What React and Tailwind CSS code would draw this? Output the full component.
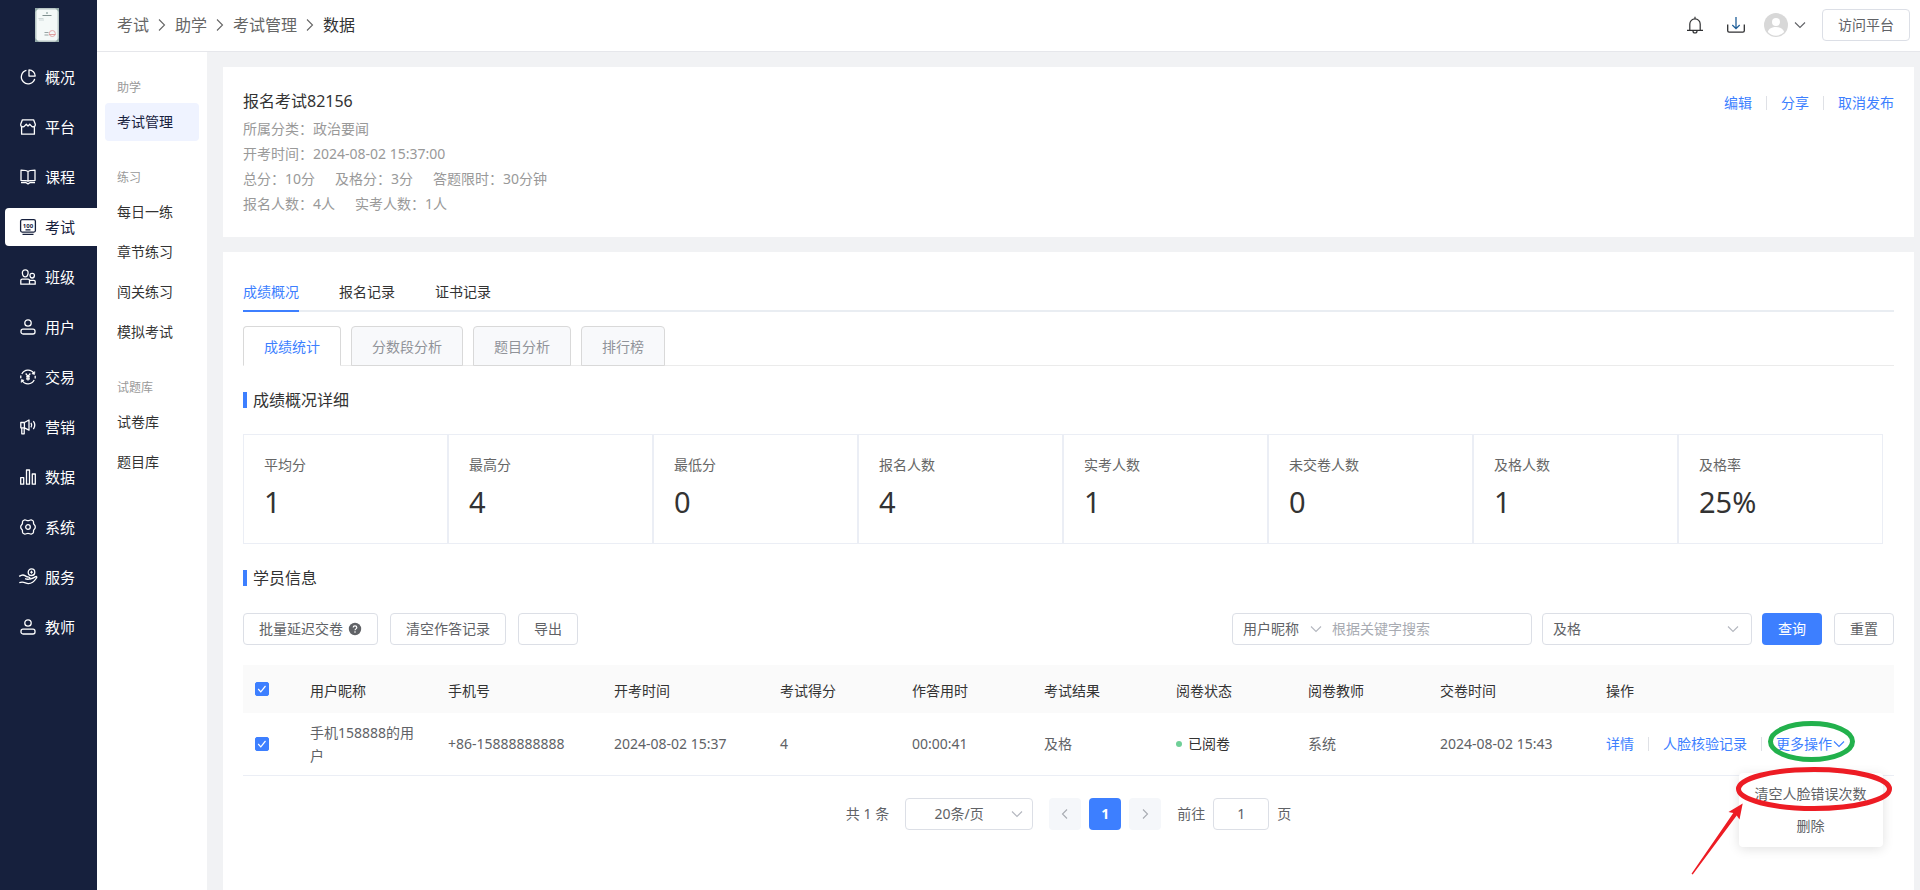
import { useState } from "react";

const sideNav = [
  { label: "概况", icon: PieIcon },
  { label: "平台", icon: StoreIcon },
  { label: "课程", icon: BookIcon },
  { label: "考试", icon: ExamIcon, active: true },
  { label: "班级", icon: GroupIcon },
  { label: "用户", icon: UserIcon },
  { label: "交易", icon: TradeIcon },
  { label: "营销", icon: HornIcon },
  { label: "数据", icon: BarsIcon },
  { label: "系统", icon: GearIcon },
  { label: "服务", icon: ServiceIcon },
  { label: "教师", icon: UserIcon },
];

const subNav = [
  { title: "助学", items: ["考试管理"] },
  { title: "练习", items: ["每日一练", "章节练习", "闯关练习", "模拟考试"] },
  { title: "试题库", items: ["试卷库", "题目库"] },
];

const breadcrumb = ["考试", "助学", "考试管理", "数据"];

const examInfo = [
  ["所属分类：政治要闻"],
  ["开考时间：2024-08-02 15:37:00"],
  ["总分：10分", "及格分：3分", "答题限时：30分钟"],
  ["报名人数：4人", "实考人数：1人"],
];

const mainTabs = ["成绩概况", "报名记录", "证书记录"];
const subTabs = ["成绩统计", "分数段分析", "题目分析", "排行榜"];

const stats = [
  { label: "平均分", value: "1" },
  { label: "最高分", value: "4" },
  { label: "最低分", value: "0" },
  { label: "报名人数", value: "4" },
  { label: "实考人数", value: "1" },
  { label: "未交卷人数", value: "0" },
  { label: "及格人数", value: "1" },
  { label: "及格率", value: "25%" },
];

const columns = [
  { label: "用户昵称", width: "w-[138px]" },
  { label: "手机号", width: "w-[166px]" },
  { label: "开考时间", width: "w-[166px]" },
  { label: "考试得分", width: "w-[132px]" },
  { label: "作答用时", width: "w-[132px]" },
  { label: "考试结果", width: "w-[132px]" },
  { label: "阅卷状态", width: "w-[132px]" },
  { label: "阅卷教师", width: "w-[132px]" },
  { label: "交卷时间", width: "w-[166px]" },
  { label: "操作", width: "w-[298px]" },
];

function NavSvg({ children }) {
  return (
    <svg
      viewBox="0 0 16 16"
      width="16"
      height="16"
      fill="none"
      stroke="currentColor"
      strokeWidth="1.3"
      strokeLinejoin="round"
      aria-hidden="true"
      className="shrink-0 overflow-visible">
      {children}
    </svg>
  );
}

function PieIcon() {
  return (
    <NavSvg>
      <path d="M6.4 1.4a6.8 6.8 0 1 0 8.3 8.4" />
      <path d="M9 .9v6.2h6.2A6.2 6.2 0 0 0 9 .9Z" />
    </NavSvg>
  );
}

function StoreIcon() {
  return (
    <NavSvg>
      <path d="M2.4.8h11.2l1.7 4.5a2.2 2.2 0 0 1-4 1.6L9.700 5.200 8 7.100 6.300 5.200 4.700 6.900a2.200 2.200 0 0 1-4-1.600Z" />
      <path d="M1.600 7.700v7.500h12.800V7.700" />
    </NavSvg>
  );
}

function BookIcon() {
  return (
    <NavSvg>
      <path d="M8 2.600v9.500M8 2.600C7 1.500 5 1.200 1 1.200v10.200c4 0 6 .1 7 .9 1-.8 3-.9 7-.9V1.200c-4 0-6 .3-7 1.400Z" />
      <path d="M1 13.500h4.800L8 14.900l2.200-1.400H15" />
    </NavSvg>
  );
}

function ExamIcon() {
  return (
    <NavSvg>
      <rect x=".6" y=".7" width="14.8" height="12.4" rx="1.5" />
      <text
        x="8"
        y="8.8"
        textAnchor="middle"
        fontSize="6"
        fontWeight="700"
        fill="currentColor"
        stroke="none">
        100
      </text>
      <path d="M5.5 10.8h5M2.500 15.400h11" />
    </NavSvg>
  );
}

function GroupIcon() {
  return (
    <NavSvg>
      <path d="M5.3.9c2 0 3 1.2 2.8 3.2-.2 2.300-1.200 3.700-2.800 3.700S2.600 6.400 2.400 4.200C2.200 2.200 3.200.9 5.300.9Z" />
      <path d="M12.2 4.300c1.500 0 2.300.9 2.200 2.300-.1 1.500-.9 2.400-2.200 2.400s-2-.9-2.200-2.400c-.1-1.400.6-2.300 2.200-2.300Z" />
      <path d="M.8 15.200v-3.700c0-.9.6-1.400 1.400-1.400h6c.8 0 1.300.5 1.300 1.400v3.700ZM9.500 15.200h5.700v-2.600c0-.9-.5-1.300-1.300-1.300H9.500" />
    </NavSvg>
  );
}

function UserIcon() {
  return (
    <NavSvg>
      <circle cx="8" cy="4" r="3.200" />
      <rect x="1" y="10.2" width="14" height="4.800" rx="2" />
    </NavSvg>
  );
}

function TradeIcon() {
  return (
    <NavSvg>
      <path d="M1.800 5A7 7 0 0 1 14 4.500M14.200 11A7 7 0 0 1 2 11.500M.8 6.600v2.600M15.200 6.800v2.600" />
      <path d="m14.900 2.600-.4 2.900-2.600-.8ZM1.100 13.400l.4-2.900 2.600.8Z" fill="currentColor" strokeWidth=".6" />
      <path d="M5.700 4.500 8 7.400l2.300-2.900M8 7.400v4.200M6 7.900h4M6 9.800h4" />
    </NavSvg>
  );
}

function HornIcon() {
  return (
    <NavSvg>
      <path d="M.8 3.500h3.600L9 1v10.200L4.400 8.800H.8ZM4.400 3.500v5.300M1.800 8.800v6h2.400v-6" />
      <path d="M11 3.800c.9 1.400.9 3.200 0 4.600M13.400 2.200c1.700 2.400 1.700 5.500 0 7.900" />
    </NavSvg>
  );
}

function BarsIcon() {
  return (
    <NavSvg>
      <rect x=".7" y="8.7" width="3" height="6.500" />
      <rect x="6.5" y="1" width="3" height="14.200" />
      <rect x="12.3" y="5" width="3" height="10.200" />
    </NavSvg>
  );
}

function GearIcon() {
  return (
    <NavSvg>
      <path d="M4.800.9C5.900.7 6.500 1.700 8 1.700S10.100.7 11.200.9c1.400.4 2.200 1 2.300 1.900.1.900-.2 1.500.3 2.400.5.8 1.500 1 1.500 2.800s-1 2-1.500 2.800c-.5.900-.2 1.500-.3 2.400-.1.900-.9 1.500-2.300 1.900-1.100.2-1.700-.8-3.200-.8s-2.100 1-3.200.8c-1.400-.4-2.200-1-2.300-1.900-.1-.9.2-1.500-.3-2.400C1.700 10 .7 9.800.7 8s1-2 1.500-2.800c.5-.9.2-1.500.3-2.400.1-.9.9-1.500 2.300-1.900Z" />
      <circle cx="8" cy="8" r="2.300" />
    </NavSvg>
  );
}

function ServiceIcon() {
  return (
    <NavSvg>
      <circle cx="11.5" cy="3.2" r="3.300" />
      <path d="M11.5 1.700v3M10 3.200h3" strokeWidth="1" />
      <path d="M-.8 7.400C1.500 5.800 3.300 5.500 4.900 6.600c1.400 1 2.400 1.500 3.900 1.500 1.400 0 1.700 1.900.2 2.100-1.400.2-2.700 0-3.900-.6" />
      <path d="M9.700 10.100c2-.3 3.900-1.100 6-2.500 1-.3 1.400.6.8 1.400-2.200 3.400-4.900 5.600-8.200 5.600-3 0-4.300-2.600-9-.9" />
    </NavSvg>
  );
}

function Chevron({ className, d = "m1 3.500 5 5 5-5" }) {
  return (
    <svg
      viewBox="0 0 12 12"
      width="12"
      height="12"
      fill="none"
      stroke="currentColor"
      strokeWidth="1.1"
      aria-hidden="true"
      className={className}>
      <path d={d} />
    </svg>
  );
}

function Logo() {
  return (
    <svg viewBox="0 0 24 34" width="24" height="34" aria-hidden="true">
      <rect width="24" height="34" fill="#b9c7c6" />
      <rect x="1.5" y="1.5" width="21" height="31" fill="#f4f9f8" />
      <path d="M0 0h4L0 4ZM24 0v4l-4-4ZM0 34v-4l4 4ZM24 34h-4l4-4Z" fill="#93a9a8" />
      <circle cx="12" cy="5" r="1" fill="#9fb0b0" />
      <path d="M7.500 7.500h9" stroke="#7f8f8f" />
      <path d="M3.500 10.500h5M4 12h5" stroke="#c4cfcf" strokeWidth=".8" />
      <path d="M9.500 24.500h4M9.500 27h4" stroke="#8d9a9a" strokeWidth=".9" />
      <circle cx="17.300" cy="25.500" r="3" fill="none" stroke="#e3a9a9" />
      <path d="M14 26.500h6.500" stroke="#d98c8c" strokeWidth=".8" />
    </svg>
  );
}

function Sidebar() {
  return (
    <aside className="w-[97px] shrink-0 bg-[#16203d] pt-2">
      <div className="flex justify-center pr-[3px]">
        <Logo />
      </div>
      <nav className="mt-4 flex flex-col gap-3 pl-[5px]">
        {sideNav.map(({ label, icon: Icon, active }) => (
          <a
            key={label}
            href="#"
            className={
              active
                ? "flex h-[38px] items-center gap-[9px] rounded-l-sm bg-white pl-[15px] text-[15px] text-[#16203d]"
                : "flex h-[38px] items-center gap-[9px] pl-[15px] text-[15px] text-white"
            }>
            <Icon />
            {label}
          </a>
        ))}
      </nav>
    </aside>
  );
}

function Header() {
  return (
    <header className="flex h-[52px] items-center justify-between border-b border-[#e6e7eb] bg-white pr-2.5 pb-px pl-5">
      <nav className="flex items-center text-base text-[#666]">
        {breadcrumb.map((item, i) => (
          <span key={item} className="flex items-center">
            {i > 0 && <Chevron d="m3 0.500 5.500 5.500L3 11.500" className="mx-[7px]" />}
            <a
              href="#"
              className={i === breadcrumb.length - 1 ? "text-[#333]" : ""}>
              {item}
            </a>
          </span>
        ))}
      </nav>

      <div className="flex items-center text-[#303133]">
        <button aria-label="消息" className="mr-6">
          <svg viewBox="0 0 16 18" width="16" height="18" fill="none" stroke="currentColor" strokeWidth="1.2">
            <path d="M0 14.400h16M2.800 14.400V8a5.200 5.200 0 0 1 10.400 0v6.400M8 2.800V.8M6 15a2 2 0 0 0 4 0" />
          </svg>
        </button>
        <button aria-label="下载" className="mr-[19px]">
          <svg viewBox="0 0 18 18" width="18" height="18" fill="none" stroke="currentColor" strokeWidth="1.3">
            <path d="M.7 8.500v6.300c0 .9.500 1.400 1.400 1.400h13.800c.9 0 1.400-.5 1.400-1.400V8.500" />
            <path d="M9 1v11.500M5.300 9 9 12.600 12.700 9" stroke="#1f5f99" />
          </svg>
        </button>
        <button aria-label="账号" className="mr-4 flex items-center gap-1.5">
          <svg viewBox="0 0 24 24" width="24" height="24">
            <circle cx="12" cy="12" r="12" fill="#d8d8d8" />
            <circle cx="12" cy="9" r="4" fill="#fff" />
            <path d="M3.800 19c1-3.600 4.300-5 8.200-5s7.200 1.400 8.200 5a11 11 0 0 1-16.400 0Z" fill="#fff" />
          </svg>
          <Chevron className="text-[#606266]" />
        </button>
        <button className="h-8 w-[88px] rounded border border-[#dcdfe6] text-sm text-[#606266]">
          访问平台
        </button>
      </div>
    </header>
  );
}

function SubMenu() {
  return (
    <aside className="flex w-[110px] shrink-0 flex-col gap-[29px] bg-white px-2 pt-7">
      {subNav.map((group) => (
        <div key={group.title}>
          <p className="mb-[7px] pl-3 text-xs leading-4 text-[#999]">{group.title}</p>
          <ul className="flex flex-col gap-0.5 text-sm text-[#333]">
            {group.items.map((item) => (
              <li key={item}>
                <a
                  href="#"
                  className={
                    item === "考试管理"
                      ? "flex h-[38px] items-center rounded bg-[#eff3ff] pl-3 text-[#16203d]"
                      : "flex h-[38px] items-center pl-3"
                  }>
                  {item}
                </a>
              </li>
            ))}
          </ul>
        </div>
      ))}
    </aside>
  );
}

function Divider() {
  return <span className="h-3.5 w-px bg-[#dfe1e6]" />;
}

function ExamSummary() {
  return (
    <section className="flex items-start justify-between bg-white px-5 pt-[19px] pb-[21px]">
      <div>
        <h1 className="text-base leading-[30px] text-[#333]">报名考试82156</h1>
        {examInfo.map((line) => (
          <p key={line[0]} className="flex gap-5 text-sm leading-[25px] text-[#999]">
            {line.map((text) => (
              <span key={text}>{text}</span>
            ))}
          </p>
        ))}
      </div>
      <div className="flex items-center gap-3.5 text-sm leading-[34px] text-[#3d7fff]">
        <a href="#">编辑</a>
        <Divider />
        <a href="#">分享</a>
        <Divider />
        <a href="#">取消发布</a>
      </div>
    </section>
  );
}

function SectionTitle({ children }) {
  return (
    <h2 className="mt-[22px] flex h-6 items-center gap-1.5 text-base text-[#333]">
      <span className="h-4 w-1 bg-[#3d7fff]" />
      {children}
    </h2>
  );
}

function Toolbar() {
  const button =
    "flex h-8 items-center gap-[5px] rounded border border-[#dcdfe6] px-[15px] text-sm text-[#606266]";
  return (
    <div className="mt-[23px] flex items-center justify-between">
      <div className="flex gap-3">
        <button className={button}>
          批量延迟交卷
          <svg viewBox="0 0 14 14" width="14" height="14" aria-hidden="true">
            <circle cx="7" cy="7" r="6.200" fill="#606266" />
            <path
              d="M5.200 5.500c0-2.200 3.600-2.200 3.600 0C8.800 6.800 7 6.900 7 8.200"
              fill="none"
              stroke="#fff"
              strokeWidth="1.2"
            />
            <circle cx="7" cy="10" r=".8" fill="#fff" />
          </svg>
        </button>
        <button className={button}>清空作答记录</button>
        <button className={button}>导出</button>
      </div>

      <div className="flex items-center text-sm text-[#606266]">
        <div className="mr-2.5 flex h-8 w-[300px] items-center rounded border border-[#dcdfe6]">
          <div className="relative">
            <select
              aria-label="搜索类型"
              className="w-[99px] appearance-none bg-transparent pl-2.5 outline-none">
              <option>用户昵称</option>
            </select>
            <Chevron className="pointer-events-none absolute top-1/2 right-2.5 -translate-y-1/2 text-[#b4b7bf]" />
          </div>
          <input
            aria-label="关键字"
            placeholder="根据关键字搜索"
            className="min-w-0 flex-1 outline-none placeholder:text-[#a8abb2]"
          />
        </div>
        <div className="relative mr-2.5">
          <select
            aria-label="考试结果"
            className="h-8 w-[210px] appearance-none rounded border border-[#dcdfe6] bg-white px-2.5 outline-none">
            <option>及格</option>
          </select>
          <Chevron className="pointer-events-none absolute top-1/2 right-[13px] -translate-y-1/2 text-[#b4b7bf]" />
        </div>
        <button className="mr-3 h-8 w-[60px] rounded bg-[#3d7fff] text-white">查询</button>
        <button className="h-8 w-[60px] rounded border border-[#dcdfe6]">重置</button>
      </div>
    </div>
  );
}

function Checkbox({ label, checked, onChange }) {
  return (
    <label className="relative block size-3.5">
      <input
        type="checkbox"
        aria-label={label}
        checked={checked}
        onChange={onChange}
        className="block size-3.5 appearance-none rounded-xs border border-[#dcdfe6] checked:border-[#3d7fff] checked:bg-[#3d7fff]"
      />
      <svg
        viewBox="0 0 14 14"
        fill="none"
        stroke="#fff"
        strokeWidth="1.2"
        className="pointer-events-none absolute inset-0">
        <path d="m3.200 7 2.600 2.800L10.500 4" />
      </svg>
    </label>
  );
}

// Ellipses around the trigger and its first entry, with the pointer arrow
function Marks() {
  return (
    <svg
      viewBox="0 0 220 170"
      width="220"
      height="170"
      fill="none"
      aria-hidden="true"
      className="pointer-events-none absolute -top-5 -left-[91px] z-20 max-w-none">
      <ellipse cx="126.500" cy="29.500" rx="41" ry="18" stroke="#22b14c" strokeWidth="5" />
      <ellipse cx="129" cy="77" rx="75.500" ry="19.500" stroke="#ed1c24" strokeWidth="5" />
      <path
        d="m57.700 91.500-3.200 16-2.800-4L7.700 162.500l-1.200-.8L48.300 101l-4.800-1Z"
        fill="#ed1c24"
      />
    </svg>
  );
}

function MoreActions() {
  return (
    <div className="relative">
      <button className="flex items-center gap-px">
        更多操作
        <Chevron />
      </button>
      <div className="absolute top-full left-1/2 z-10 mt-[18px] flex w-36 -translate-x-1/2 flex-col rounded bg-white py-[5px] text-[#606266] shadow-[0_2px_12px_rgba(0,0,0,0.12)]">
        <button className="leading-8">清空人脸错误次数</button>
        <button className="leading-8">删除</button>
      </div>
      <Marks />
    </div>
  );
}

function StudentTable() {
  const [checked, setChecked] = useState(true);
  const toggle = () => setChecked((v) => !v);

  return (
    <table className="mt-5 w-full table-fixed text-left text-sm leading-[23px] text-[#606266]">
      <thead>
        <tr className="h-12 bg-[#fafafa] text-[#333]">
          <th className="w-[57px] pl-3">
            <Checkbox label="全选" checked={checked} onChange={toggle} />
          </th>
          {columns.map((col) => (
            <th key={col.label} className={`${col.width} px-2.5 pt-0.5 font-normal`}>
              {col.label}
            </th>
          ))}
        </tr>
      </thead>
      <tbody>
        <tr className="h-[62px] border-b border-[#ebeef5]">
          <td className="pl-3">
            <Checkbox label="选择用户" checked={checked} onChange={toggle} />
          </td>
          <td className="pr-3 pl-2.5">手机158888的用户</td>
          <td className="px-2.5">+86-15888888888</td>
          <td className="px-2.5">2024-08-02 15:37</td>
          <td className="px-2.5">4</td>
          <td className="px-2.5">00:00:41</td>
          <td className="px-2.5">及格</td>
          <td className="px-2.5 text-[#333]">
            <span className="flex items-center gap-1.5">
              <span className="size-1.5 rounded-full bg-[#6fcf97]" />
              已阅卷
            </span>
          </td>
          <td className="px-2.5">系统</td>
          <td className="px-2.5">2024-08-02 15:43</td>
          <td className="px-2.5">
            <div className="flex items-center gap-3.5 text-[#3d7fff]">
              <button>详情</button>
              <Divider />
              <button>人脸核验记录</button>
              <Divider />
              <MoreActions />
            </div>
          </td>
        </tr>
      </tbody>
    </table>
  );
}

function Pagination() {
  return (
    <div className="mt-[22px] flex items-center justify-center gap-4 text-sm text-[#606266]">
      <span>共 1 条</span>
      <div className="relative">
        <select
          aria-label="每页条数"
          className="h-8 w-32 appearance-none rounded border border-[#dcdfe6] bg-white pr-[30px] pl-2.5 text-center outline-none">
          <option>20条/页</option>
        </select>
        <Chevron className="pointer-events-none absolute top-1/2 right-2.5 -translate-y-1/2 text-[#b4b7bf]" />
      </div>
      <div className="flex gap-2">
        <button
          aria-label="上一页"
          className="flex size-8 items-center justify-center rounded-sm bg-[#f5f7fa] text-[#a8abb2]">
          <Chevron d="M8 1.500 3.500 6 8 10.500" />
        </button>
        <button className="size-8 rounded-sm bg-[#3d7fff] font-bold text-white">1</button>
        <button
          aria-label="下一页"
          className="flex size-8 items-center justify-center rounded-sm bg-[#f5f7fa] text-[#a8abb2]">
          <Chevron d="M4 1.500 8.500 6 4 10.500" />
        </button>
      </div>
      <label className="flex items-center gap-2">
        前往
        <input
          defaultValue="1"
          className="h-8 w-14 rounded border border-[#dcdfe6] text-center outline-none"
        />
        页
      </label>
    </div>
  );
}

function Results() {
  return (
    <section className="flex-1 bg-white px-5 pt-5 pb-10">
      {/* Tabs */}
      <div className="flex h-10 gap-10 border-b-2 border-[#e9edf2] text-sm text-[#333]">
        {mainTabs.map((tab, i) => (
          <button
            key={tab}
            className={
              i === 0
                ? "-mb-0.5 border-b-2 border-[#3d7fff] pt-0.5 text-[#3d7fff]"
                : "-mb-0.5"
            }>
            {tab}
          </button>
        ))}
      </div>

      <div className="mt-3.5 flex h-10 gap-2.5 border-b border-[#ebebeb] text-sm">
        {subTabs.map((tab, i) => (
          <button
            key={tab}
            className={
              i === 0
                ? "-mb-px rounded-t border border-[#d9d9d9] border-b-white bg-white px-5 pt-0.5 text-[#3d7fff]"
                : "-mb-px rounded-t border border-[#d9d9d9] bg-[#f8f9fb] px-5 pt-0.5 text-[#909399]"
            }>
            {tab}
          </button>
        ))}
      </div>

      <SectionTitle>成绩概况详细</SectionTitle>
      <dl className="mt-[22px] mr-[11px] grid grid-cols-8">
        {stats.map((s) => (
          <div key={s.label} className="h-[110px] border border-[#ebeef5] px-5 pt-5">
            <dt className="text-sm leading-5 text-[#666]">{s.label}</dt>
            <dd className="mt-[7px] text-[29px] leading-10 text-[#333]">{s.value}</dd>
          </div>
        ))}
      </dl>

      <SectionTitle>学员信息</SectionTitle>
      <Toolbar />
      <StudentTable />
      <Pagination />
    </section>
  );
}

export default function App() {
  return (
    <div className="flex min-h-screen bg-[#f1f2f4] font-['Noto_Sans','Noto_Sans_CJK_SC',sans-serif]">
      <Sidebar />
      <div className="flex min-w-0 flex-1 flex-col">
        <Header />
        <div className="flex flex-1">
          <SubMenu />
          <main className="flex min-w-0 flex-1 flex-col gap-[15px] pt-[15px] pr-1.5 pl-4">
            <ExamSummary />
            <Results />
          </main>
        </div>
      </div>
    </div>
  );
}
